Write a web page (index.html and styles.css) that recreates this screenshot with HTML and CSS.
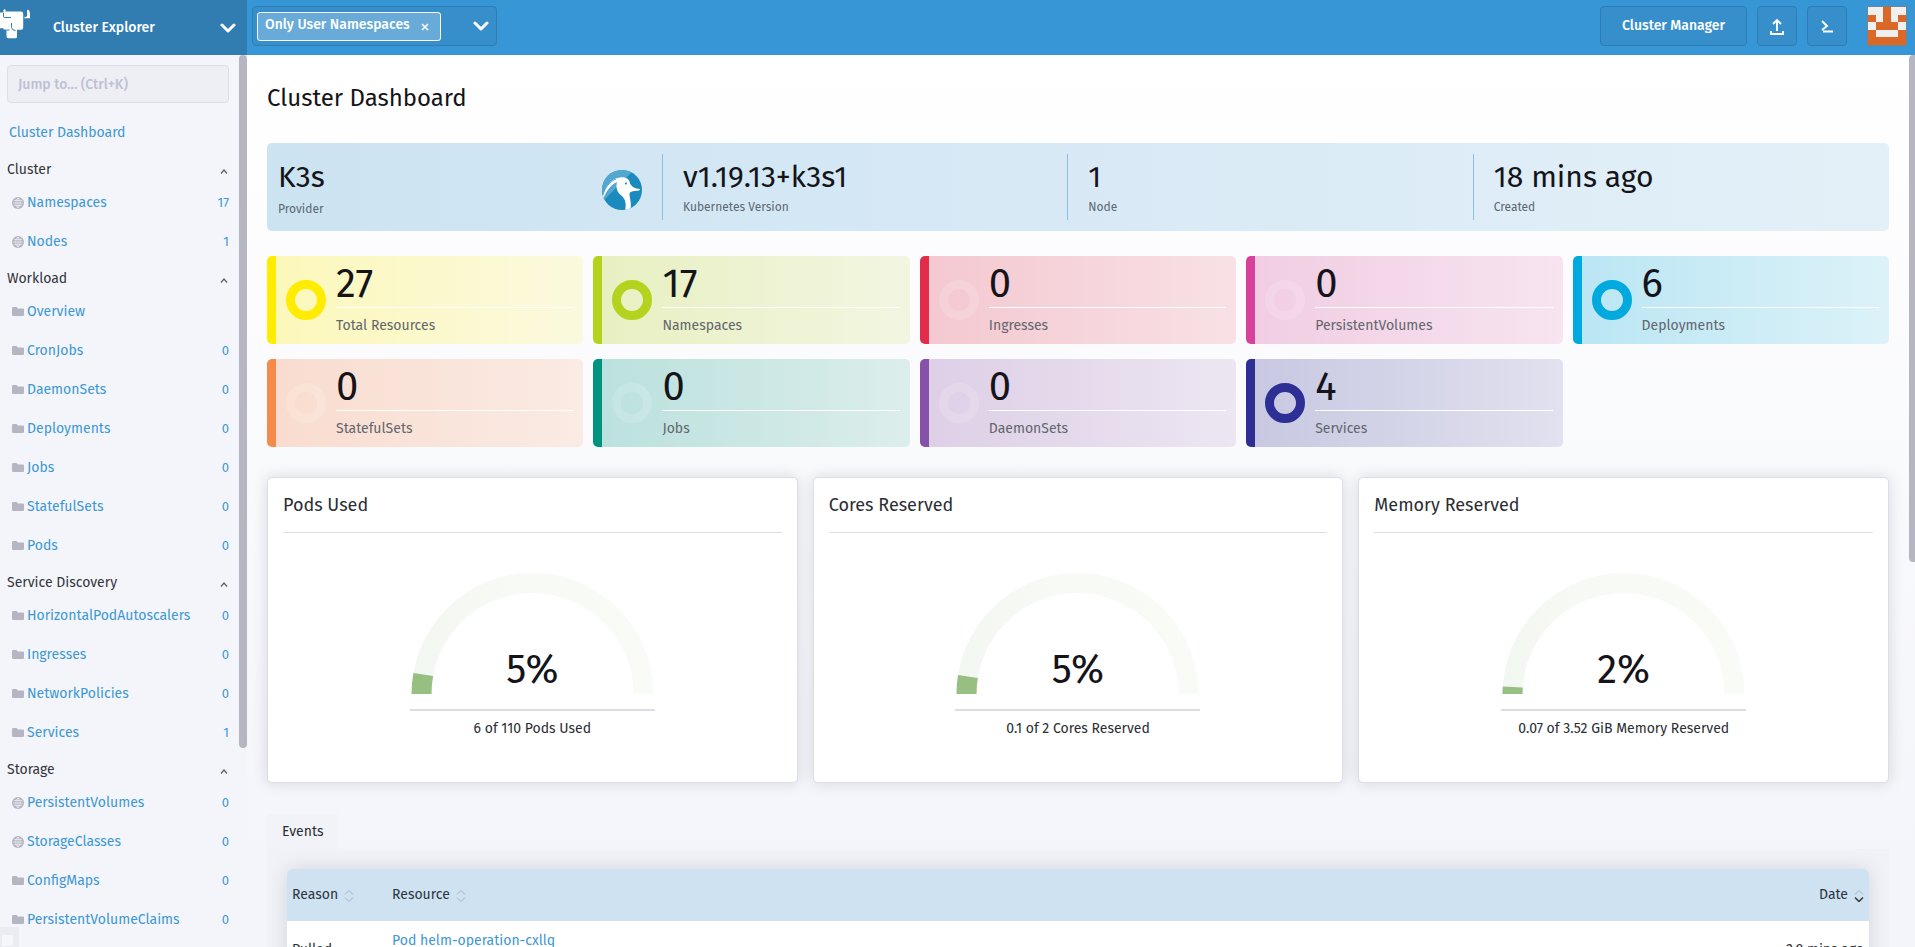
FILE: index.html
```
<!DOCTYPE html>
<html lang="en">
<head>
<meta charset="utf-8">
<title>Cluster Dashboard</title>
<link rel="stylesheet" href="styles.css">
</head>
<body>
<svg class="sprites" aria-hidden="true">
  <symbol id="globe" viewBox="0 0 12 12"><circle cx="6" cy="6" r="6" fill="#b6b6c2"/><path d="M1 6h10M6 1v10M2 3.500h8M2 8.500h8M6 1C3 3.500 3 8.500 6 11M6 1c3 2.500 3 7.500 0 10" fill="none" stroke="#f4f5fa" stroke-width=".6"/></symbol>
  <symbol id="folder" viewBox="0 0 12 10"><path d="M1 0h3.500l1.500 1.500h5a1 1 0 0 1 1 1V8a1 1 0 0 1-1 1H1a1 1 0 0 1-1-1V1a1 1 0 0 1 1-1z" fill="#b6b6c2"/></symbol>
  <symbol id="up" viewBox="0 0 8 5"><path d="M1 4.500 4 1l3 3.500" fill="none" stroke="#5a5f66" stroke-width="1.200"/></symbol>
  <symbol id="down" viewBox="0 0 16 10"><path d="M2 2l6 6 6-6" fill="none" stroke="#fff" stroke-width="3" stroke-linecap="round" stroke-linejoin="round"/></symbol>
</svg>
<header class="topbar">
  <div class="product">
    <svg class="cow" viewBox="0 0 31 31" aria-label="Rancher"><path fill="#fff" d="M0 3.500h3.500V1.200C3.500 0 5.600 0 5.600 1.200V2.500h15.400q2.200 0 2.200 2.200V18.500q0 2.200-2.200 2.200H17v7q0 1.500-1.500 1.500H8.500Q6.500 29.200 6.500 27.200V20.500H3.500V19.300H0z"/><path fill="#fff" d="M24 8.500q3 0 3.200-3L27 2.500Q27 .5 28 .5q2 1.500 2 4V9.200H24z"/><path d="M3.500 4v3.500q0 1 1 1H11M11.500 14v4.500q.5 3 4 3M6.500 21h3" fill="none" stroke="#317cb0" stroke-width="1"/></svg>
    <button class="product-button" type="button">Cluster Explorer<svg class="caret"><use href="#down"/></svg></button>
  </div>
  <div class="filter">
    <span class="chip">Only User Namespaces <button type="button" class="chip-close" aria-label="Remove"><svg width="8" height="8" viewBox="0 0 8 8"><path d="M1 1l6 6M7 1l-6 6" fill="none" stroke="#fff" stroke-width="1.600"/></svg></button></span>
    <button type="button" class="filter-open" aria-label="Open namespaces"><svg class="caret"><use href="#down"/></svg></button>
  </div>
  <div class="actions">
    <button type="button" class="action manager">Cluster Manager</button>
    <button type="button" class="action" aria-label="Import YAML"><svg width="16" height="18" viewBox="0 0 16 18"><path d="M8 14V3M4 7l4-4 4 4M2 14v3h12v-3" fill="none" stroke="#fff" stroke-width="1.900"/></svg></button>
    <button type="button" class="action" aria-label="Kubectl shell"><svg width="14" height="14" viewBox="0 0 14 14"><path d="M2 2l5 5-5 4M3 12.500h10" fill="none" stroke="#fff" stroke-width="1.900"/></svg></button>
    <svg class="avatar" viewBox="0 0 5 5" shape-rendering="crispEdges"><path fill="#f0f0f0" d="M0 0h5v5H0z"/><path fill="#db6826" d="M2 0h1v2h1V1h1v1H4v1H1V2H0V1h1v1h1zM0 3h1v1h3V3h1v2H0z"/></svg>
  </div>
</header>
<div class="body">
<nav class="sidebar">
  <div class="sidebar-inner">
  <input class="jump" type="text" placeholder="Jump to... (Ctrl+K)" aria-label="Jump to">
  <a class="root" href="#">Cluster Dashboard</a>
  <button class="group" type="button">Cluster<svg><use href="#up"/></svg></button>
  <a class="item" href="#"><svg><use href="#globe"/></svg>Namespaces<span>17</span></a>
  <a class="item" href="#"><svg><use href="#globe"/></svg>Nodes<span>1</span></a>
  <button class="group" type="button">Workload<svg><use href="#up"/></svg></button>
  <a class="item" href="#"><svg><use href="#folder"/></svg>Overview</a>
  <a class="item" href="#"><svg><use href="#folder"/></svg>CronJobs<span>0</span></a>
  <a class="item" href="#"><svg><use href="#folder"/></svg>DaemonSets<span>0</span></a>
  <a class="item" href="#"><svg><use href="#folder"/></svg>Deployments<span>0</span></a>
  <a class="item" href="#"><svg><use href="#folder"/></svg>Jobs<span>0</span></a>
  <a class="item" href="#"><svg><use href="#folder"/></svg>StatefulSets<span>0</span></a>
  <a class="item" href="#"><svg><use href="#folder"/></svg>Pods<span>0</span></a>
  <button class="group" type="button">Service Discovery<svg><use href="#up"/></svg></button>
  <a class="item" href="#"><svg><use href="#folder"/></svg>HorizontalPodAutoscalers<span>0</span></a>
  <a class="item" href="#"><svg><use href="#folder"/></svg>Ingresses<span>0</span></a>
  <a class="item" href="#"><svg><use href="#folder"/></svg>NetworkPolicies<span>0</span></a>
  <a class="item" href="#"><svg><use href="#folder"/></svg>Services<span>1</span></a>
  <button class="group" type="button">Storage<svg><use href="#up"/></svg></button>
  <a class="item" href="#"><svg><use href="#globe"/></svg>PersistentVolumes<span>0</span></a>
  <a class="item" href="#"><svg><use href="#globe"/></svg>StorageClasses<span>0</span></a>
  <a class="item" href="#"><svg><use href="#folder"/></svg>ConfigMaps<span>0</span></a>
  <a class="item" href="#"><svg><use href="#folder"/></svg>PersistentVolumeClaims<span>0</span></a>
  </div>
  <div class="thumb side-thumb"></div>
  <div class="corner"></div>
</nav>
<main class="main">
  <h1>Cluster Dashboard</h1>
  <section class="glance">
    <div class="fact provider"><div><strong>K3s</strong><small>Provider</small></div>
      <svg width="42" height="42" viewBox="0 0 42 42"><defs><clipPath id="disc"><circle cx="21" cy="21" r="20"/></clipPath></defs><g clip-path="url(#disc)"><path fill="#1b8abc" d="M0 0h42v42H0z"/><path fill="#54a8cf" d="M0 0h34L0 34z"/><path fill="#fff" d="M1 32C3 22 7 10 19 8.500c6-.7 9.500 1.500 10 6 2 3.500 5 5 10 5.500 0 1.500-1.500 1.800-4 2-4 .2-6.500.5-6.500 3.500C29 30 31 36 29 42h-5c1.500-7 .5-11.500-3-15-5-3.500-6.500-8-5-14C9 16 5 23 1 32z"/><path d="M1 27C4 19 8 13 15 10" fill="none" stroke="#54a8cf" stroke-width="1"/><circle cx="25" cy="14.500" r="1.100" fill="#1b8abc"/></g></svg></div>
    <div class="fact"><strong>v1.19.13+k3s1</strong><small>Kubernetes Version</small></div>
    <div class="fact"><strong>1</strong><small>Node</small></div>
    <div class="fact"><strong>18 mins ago</strong><small>Created</small></div>
  </section>
  <section class="tiles">
    <a href="#" class="tile yellow"><i class="ring"></i><div><b>27</b><span>Total Resources</span></div></a>
    <a href="#" class="tile lime"><i class="ring"></i><div><b>17</b><span>Namespaces</span></div></a>
    <a href="#" class="tile red empty"><i class="ring"></i><div><b>0</b><span>Ingresses</span></div></a>
    <a href="#" class="tile pink empty"><i class="ring"></i><div><b>0</b><span>PersistentVolumes</span></div></a>
    <a href="#" class="tile cyan"><i class="ring"></i><div><b>6</b><span>Deployments</span></div></a>
    <a href="#" class="tile orange empty"><i class="ring"></i><div><b>0</b><span>StatefulSets</span></div></a>
    <a href="#" class="tile teal empty"><i class="ring"></i><div><b>0</b><span>Jobs</span></div></a>
    <a href="#" class="tile purple empty"><i class="ring"></i><div><b>0</b><span>DaemonSets</span></div></a>
    <a href="#" class="tile navy"><i class="ring"></i><div><b>4</b><span>Services</span></div></a>
  </section>
  <section class="gauges">
    <article class="card"><h2>Pods Used</h2>
      <div class="gauge"><svg viewBox="0 0 245 122"><defs><linearGradient id="track"><stop offset="0" stop-color="#f3f7f2"/><stop offset=".5" stop-color="#f8faf5"/><stop offset="1" stop-color="#f9fbf7"/></linearGradient></defs><path fill="url(#track)" d="M1.500 122a121 121 0 0 1 242 0h-20a101 101 0 0 0-202 0z"/><path fill="#97bf82" d="M1.500 122a121 121 0 0 1 1.900-21l19.700 3a101 101 0 0 0-1.600 18z"/></svg><b>5%</b></div>
      <p>6 of 110 Pods Used</p></article>
    <article class="card"><h2>Cores Reserved</h2>
      <div class="gauge"><svg viewBox="0 0 245 122"><path fill="url(#track)" d="M1.500 122a121 121 0 0 1 242 0h-20a101 101 0 0 0-202 0z"/><path fill="#97bf82" d="M1.500 122a121 121 0 0 1 1.500-19l19.800 3a101 101 0 0 0-1.300 16z"/></svg><b>5%</b></div>
      <p>0.1 of 2 Cores Reserved</p></article>
    <article class="card"><h2>Memory Reserved</h2>
      <div class="gauge"><svg viewBox="0 0 245 122"><path fill="url(#track)" d="M1.500 122a121 121 0 0 1 242 0h-20a101 101 0 0 0-202 0z"/><path fill="#97bf82" d="M1.500 122a121 121 0 0 1 .3-7.600l20 1.100a101 101 0 0 0-.3 6.500z"/></svg><b>2%</b></div>
      <p>0.07 of 3.52 GiB Memory Reserved</p></article>
  </section>
  <section class="events">
    <button class="tab" type="button">Events</button>
    <div class="panel">
      <table>
        <thead><tr>
          <th class="reason">Reason<svg class="sort" viewBox="0 0 10 12"><path d="M1 4.500l4-4 4 4M1 7.500l4 4 4-4"/></svg></th>
          <th>Resource<svg class="sort" viewBox="0 0 10 12"><path d="M1 4.500l4-4 4 4M1 7.500l4 4 4-4"/></svg></th>
          <th class="date">Date<svg class="sort" viewBox="0 0 10 12"><path d="M1 4.500l4-4 4 4"/><path class="on" d="M1 7.500l4 4 4-4"/></svg></th>
        </tr></thead>
        <tbody><tr><td>Pulled</td><td class="resource"><a href="#">Pod helm-operation-cxllq</a></td><td class="date">2.9 mins ago</td></tr></tbody>
      </table>
    </div>
  </section>
  <div class="thumb main-thumb"></div>
</main>
</div>
</body>
</html>
```
FILE: styles.css
```
* { box-sizing: border-box; }
html, body { height: 100%; }
body { margin: 0; display: flex; flex-direction: column; overflow: hidden; font: 14px/20px "Fira Sans", "Noto Sans", sans-serif; color: #141419; }
button, input { font: inherit; color: inherit; }
button { background: none; border: 0; padding: 0; cursor: pointer; }
a { color: #3d98d3; text-decoration: none; }
h1, h2, p { margin: 0; font-weight: 400; }
.sprites { display: none; }

.topbar { flex: none; display: flex; height: 55px; background: #3797d6; color: #fff; font-weight: 500; }
.product { flex: none; width: 247px; display: flex; align-items: center; gap: 22px; background: #317cb0; }
.cow { width: 31px; height: 31px; margin-bottom: 6px; }
.product-button { flex: 1; display: flex; align-items: center; justify-content: space-between; padding-right: 11px; }
.caret { width: 16px; height: 10px; display: block; }
.filter { flex: none; display: flex; align-items: center; justify-content: space-between; width: 245px; height: 40px; margin: 6px 0 0 5px; padding: 0 7px 0 4px; border: 1px solid #317cb0; border-radius: 4px; background: #368fcb; }
.chip { display: flex; align-items: center; gap: 11px; height: 29px; padding: 0 11px 3px 7px; border: 1px solid #fff; border-radius: 3px; background: #68abd8; }
.chip-close { display: flex; margin-top: 5px; }
.actions { margin-left: auto; display: flex; align-items: flex-start; gap: 10px; padding: 6px 8px 0 0; }
.action { display: flex; align-items: center; justify-content: center; width: 40px; height: 40px; border: 1px solid #317cb0; border-radius: 4px; background: #368fcb; }
.manager { width: 147px; }
.avatar { width: 40px; height: 40px; margin-left: 10px; border: 1px solid #708590; }

.body { flex: 1; min-height: 0; display: flex; }
.sidebar { flex: none; position: relative; width: 247px; background: #f4f5fa; overflow: hidden; }
.sidebar-inner { display: flex; flex-direction: column; padding: 10px 18px 0 7px; }
.jump { height: 38px; margin-bottom: 11px; padding: 0 10px; border: 1px solid #dcdee7; border-radius: 4px; background: #eeeff4; font-weight: 500; }
.jump::placeholder { color: #bec1d4; opacity: 1; }
.root { height: 38px; padding: 9px 2px; }
.group { display: flex; align-items: center; justify-content: space-between; height: 31px; padding: 4px 1px 0 0; color: #33363b; }
.group svg { width: 8px; height: 5px; margin-top: 4px; }
.item { display: flex; align-items: center; height: 39px; padding-left: 5px; }
.item svg { width: 12px; height: 12px; margin-right: 3px; }
.item span { margin-left: auto; font-size: 13px; }
.thumb { position: absolute; top: 0; right: 0; border-radius: 4px; background: #b6b6c2; }
.side-thumb { width: 8px; height: 693px; }
.main-thumb { width: 6px; height: 507px; border-radius: 4px 0 0 4px; }
.corner { position: absolute; left: 0; bottom: 0; width: 19px; height: 20px; border: solid #ebecf1; border-width: 8px 6px 1px 2px; background: #f6f7fa; }

.main { flex: 1; min-width: 0; position: relative; overflow: hidden; padding: 24px 26px 0 20px; background: linear-gradient(#fff, #f4f5fa 800px); }
h1 { font-size: 24px; line-height: 38px; margin-bottom: 26px; }
.glance { display: flex; height: 88px; padding: 11px; border-radius: 5px; background: linear-gradient(to right, #cce3f1, #d6e8f5 40%, #e3f0f8); }
.fact { flex: 1; display: flex; flex-direction: column; gap: 5px; padding-left: 20px; border-left: 1px solid #8cc1e4; }
.fact strong { display: block; padding-top: 6px; font-size: 30px; line-height: 34px; font-weight: 400; }
.fact small { display: block; font-size: 12px; line-height: 16px; color: #5c6772; }
.provider { flex: 0 0 384px; flex-direction: row; justify-content: space-between; padding: 0 19px 0 0; border: 0; }
.provider small { margin-top: 7px; }
.provider svg { margin-top: 15px; }

.tiles { display: grid; grid-template-columns: repeat(5, 1fr); gap: 15px 10px; margin-top: 25px; }
.tile { display: flex; align-items: center; gap: 10px; height: 88px; padding: 0 10px; border-left: 9px solid var(--c); border-radius: 5px; background: linear-gradient(to right, var(--a), var(--b)); }
.ring { flex: none; width: 40px; height: 40px; border: 9px solid var(--c); border-radius: 50%; }
.empty .ring { border-color: rgba(255, 255, 255, .15); }
.tile div { flex: 1; }
.tile b { display: block; height: 52px; padding-top: 5px; border-bottom: 1px solid #fff; font-size: 40px; line-height: 46px; font-weight: 400; color: #141419; }
.tile span { display: block; padding: 8px 0; color: #62666c; }
.yellow { --c: #ffec00; --a: #fcf8bb; --b: #fbf9de; }
.lime { --c: #b4d31e; --a: #e8f0c2; --b: #f2f6e1; }
.red { --c: #e22c4b; --a: #f4c8d0; --b: #f8e1e6; }
.pink { --c: #d7419a; --a: #f1cde3; --b: #f7e4f0; }
.cyan { --c: #00aadf; --a: #bbe6f4; --b: #dcf2f8; }
.orange { --c: #f58a4b; --a: #f9dccf; --b: #faebe4; }
.teal { --c: #009380; --a: #bbe1de; --b: #dceeeb; }
.purple { --c: #8651a8; --a: #decfe6; --b: #ece6f2; }
.navy { --c: #2e2f95; --a: #c8c8e2; --b: #e1e1ef; }

.gauges { display: grid; grid-template-columns: repeat(3, 1fr); gap: 15px; margin-top: 30px; }
.card { height: 306px; padding: 15px; border: 1px solid #dcdee7; border-radius: 5px; background: #fff; box-shadow: 0 0 15px rgba(20, 20, 50, .14); }
.card h2 { height: 40px; border-bottom: 1px solid #dcdee7; font-size: 18px; line-height: 24px; color: #2b2e33; }
.gauge { position: relative; width: 245px; height: 178px; margin: 0 auto; padding-top: 39px; border-bottom: 2px solid #dcdee7; }
.gauge svg { display: block; width: 245px; height: 122px; }
.gauge b { position: absolute; left: 0; right: 0; top: 113px; text-align: center; font-size: 40px; line-height: 48px; font-weight: 400; }
.card p { margin-top: 8px; text-align: center; color: #2b2e33; }

.events { margin-top: 31px; }
.tab { display: block; height: 35px; padding: 0 15px; background: #f2f3f8; color: #2b2e33; }
.panel { padding: 20px 20px 0; background: #f1f2f7; }
table { width: 100%; border-collapse: collapse; background: #fff; border-radius: 5px 5px 0 0; box-shadow: 0 0 20px rgba(20, 20, 50, .12); }
th { height: 52px; padding: 0 5px; text-align: left; font-weight: 400; background: #cfe2f1; color: #2b3540; }
th:first-child { border-radius: 5px 0 0 0; }
th:last-child { border-radius: 0 5px 0 0; }
td { height: 57px; padding: 0 5px; color: #2b2e33; }
.reason { width: 100px; }
td.resource { padding-bottom: 18px; }
.date { text-align: right; }
.sort { width: 10px; height: 12px; margin-left: 6px; vertical-align: -3px; fill: none; stroke: #9fb2c2; }
.sort .on { stroke: #33363b; stroke-width: 1.5; }
```
